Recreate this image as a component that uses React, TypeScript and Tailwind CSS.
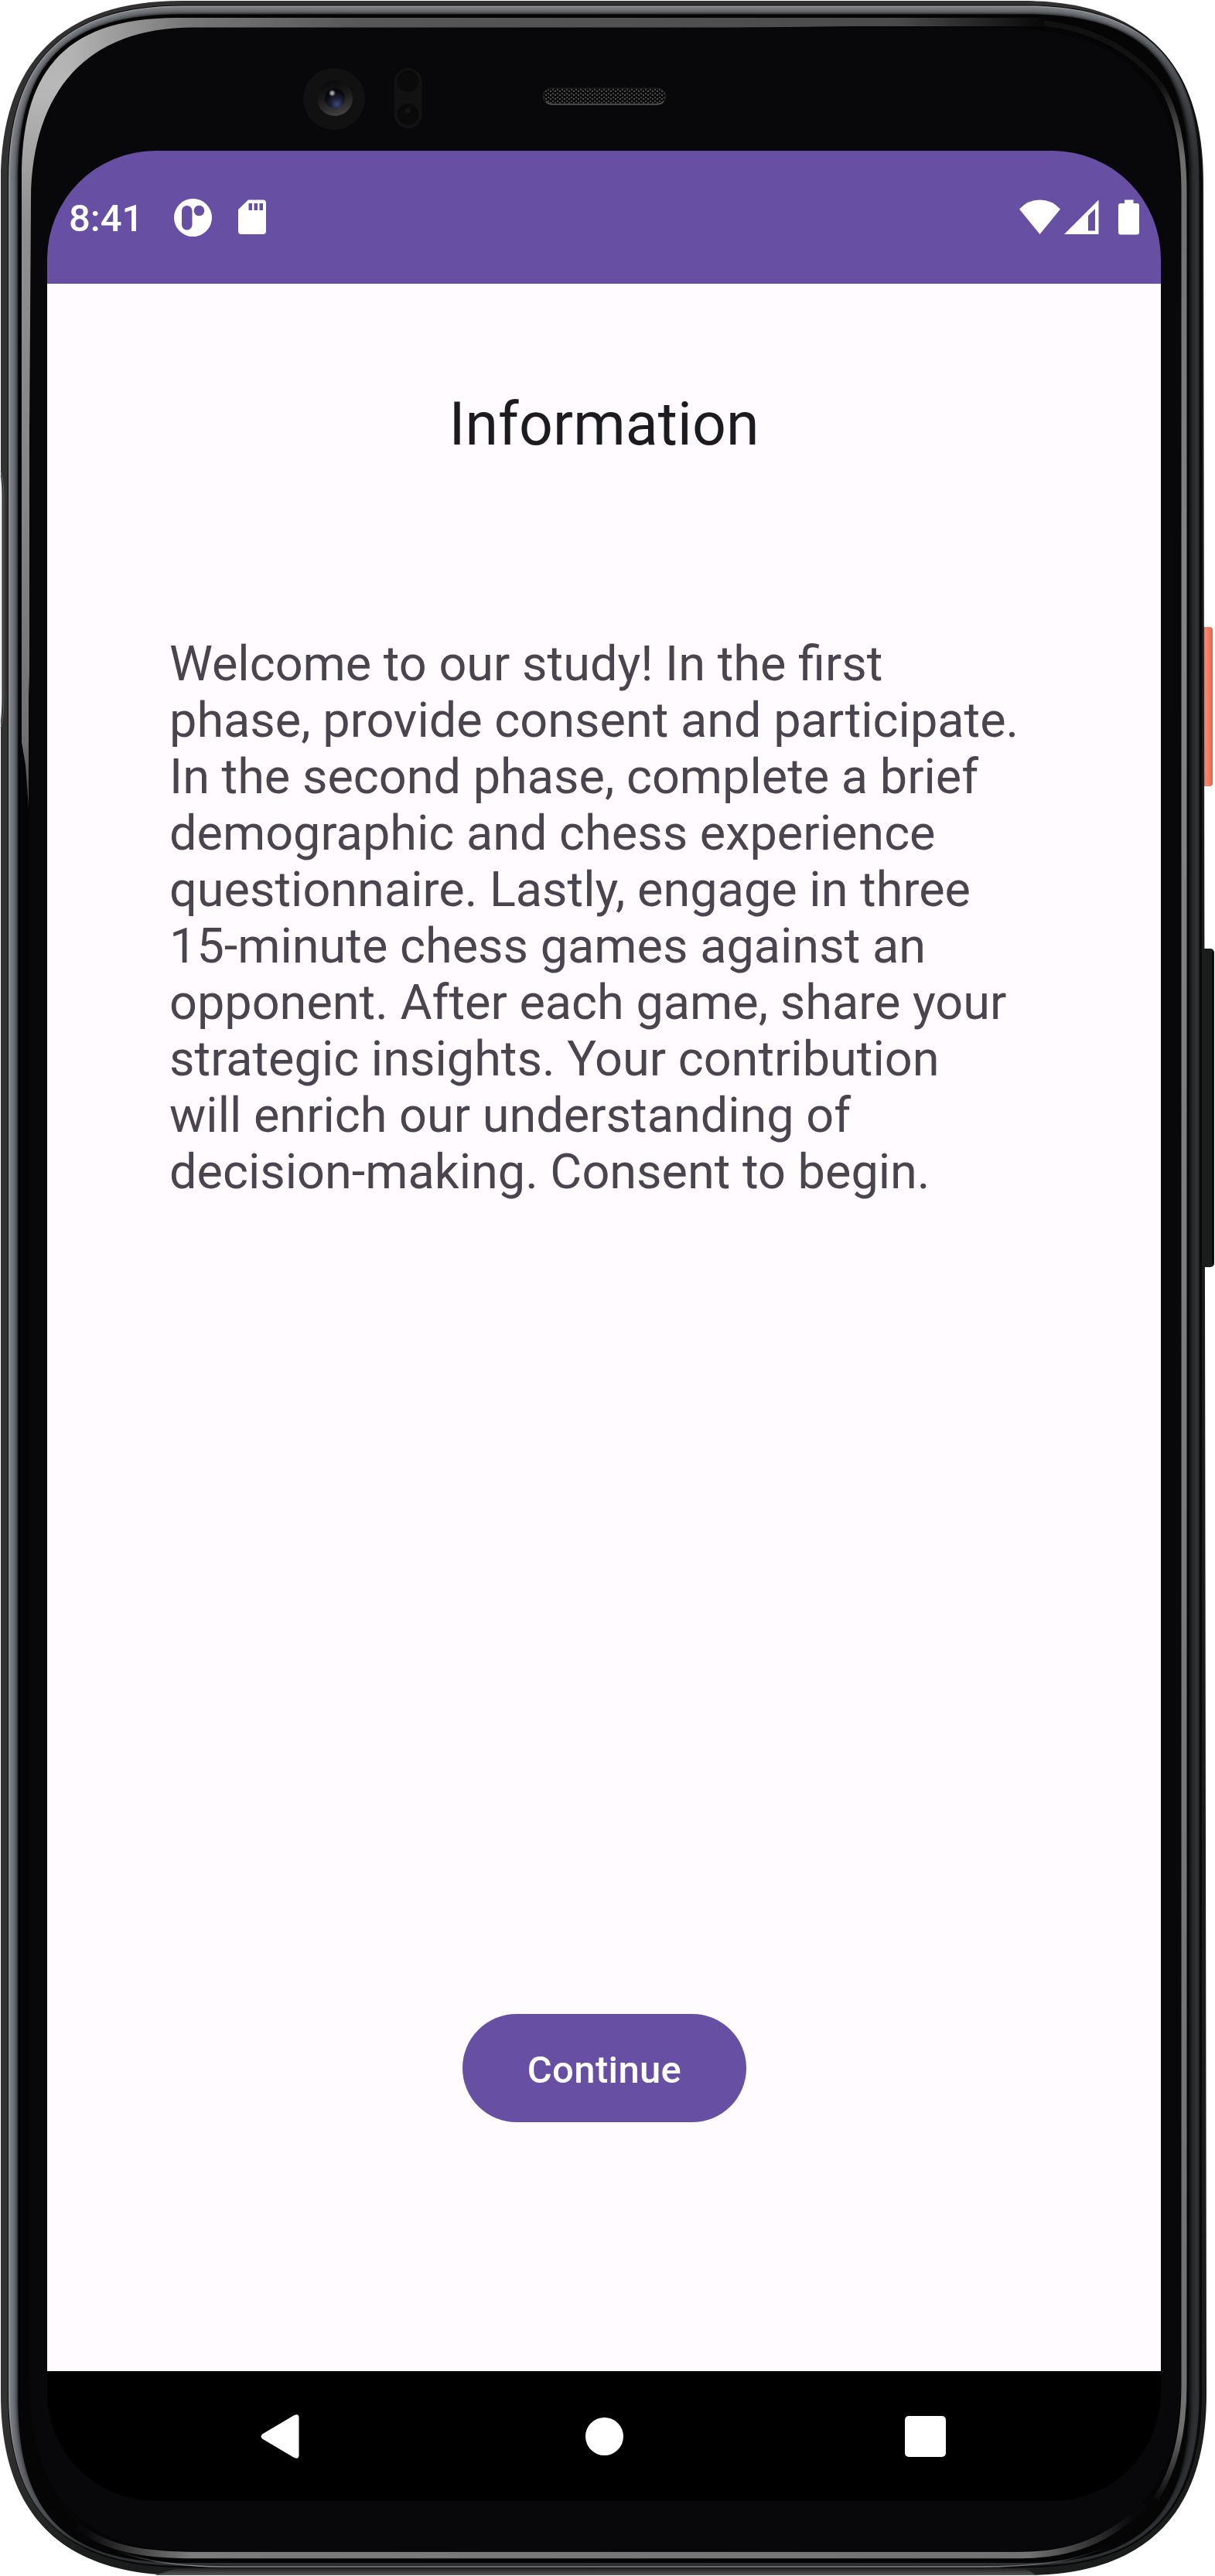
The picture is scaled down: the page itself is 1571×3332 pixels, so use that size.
import type { ReactNode } from "react";

/** Closed outline of the handset at a given inset, with soft superelliptic corners. */
function shell(l: number, t: number, r: number, b: number, k = 234, c = 79) {
  return `M${l},${t + k}C${l},${t + c} ${l + c},${t} ${l + k},${t}H${r - k}C${r - c},${t} ${r},${t + c} ${r},${t + k}V${b - k}C${r},${b - c} ${r - c},${b} ${r - k},${b}H${l + k}C${l + c},${b} ${l},${b - c} ${l},${b - k}Z`;
}

function Grad({ id, from, to }: { id: string; from: string; to: string }) {
  return (
    <linearGradient id={id} x1="0" y1="0" x2="1" y2="1">
      <stop offset="0.47" stopColor={from} />
      <stop offset="0.53" stopColor={to} />
    </linearGradient>
  );
}

const metal = [
  { from: "#8f9296", to: "#0a0a0b" },
  { from: "#787b80", to: "#2b2d2f" },
  { from: "#73767b", to: "#2e3033" },
  { from: "#6a6d72", to: "#2e3033" },
  { from: "#5d6064", to: "#2a2c2f" },
  { from: "#46484c", to: "#242628" },
  { from: "#242527", to: "#151617" },
];

function Handset() {
  return (
    <svg className="absolute inset-0" width="1571" height="3332" viewBox="0 0 1571 3332" aria-hidden="true">
      <defs>
        <Grad id="edge" from="#323232" to="#1b1c1c" />
        {metal.map((m, i) => (
          <Grad key={i} id={`m${i}`} from={m.from} to={m.to} />
        ))}
        <linearGradient id="coral" x1="0" x2="1">
          <stop offset="0" stopColor="#d9583f" />
          <stop offset="0.4" stopColor="#e0624a" />
          <stop offset="0.6" stopColor="#f58a70" />
          <stop offset="0.8" stopColor="#f2795f" />
          <stop offset="1" stopColor="#e85f47" />
        </linearGradient>
        <linearGradient id="glintL" gradientUnits="userSpaceOnUse" x1="0" y1="30" x2="0" y2="1060">
          <stop offset="0" stopColor="#b0b0b0" />
          <stop offset="0.08" stopColor="#b8b8b8" />
          <stop offset="0.25" stopColor="#8e8e8e" />
          <stop offset="0.6" stopColor="#858585" />
          <stop offset="0.9" stopColor="#707070" />
          <stop offset="1" stopColor="#3a3a3a" />
        </linearGradient>
        <linearGradient id="glintT" gradientUnits="userSpaceOnUse" x1="90" y1="0" x2="1350" y2="0">
          <stop offset="0" stopColor="#b4b4b4" />
          <stop offset="0.12" stopColor="#777777" />
          <stop offset="0.3" stopColor="#575757" />
          <stop offset="0.85" stopColor="#4a4a4a" />
          <stop offset="1" stopColor="#080809" />
        </linearGradient>
        <linearGradient id="glintR" gradientUnits="userSpaceOnUse" x1="0" y1="110" x2="0" y2="3235">
          <stop offset="0" stopColor="#111111" />
          <stop offset="0.03" stopColor="#6e6e6e" />
          <stop offset="0.2" stopColor="#838383" />
          <stop offset="0.97" stopColor="#707070" />
          <stop offset="1" stopColor="#08080a" />
        </linearGradient>
        <linearGradient id="glintB" gradientUnits="userSpaceOnUse" x1="110" y1="0" x2="1465" y2="0">
          <stop offset="0" stopColor="#08080a" />
          <stop offset="0.1" stopColor="#7c7c7c" />
          <stop offset="0.9" stopColor="#737373" />
          <stop offset="1" stopColor="#08080a" />
        </linearGradient>
        <linearGradient id="rim" gradientUnits="userSpaceOnUse" x1="150" y1="0" x2="1430" y2="0">
          <stop offset="0" stopColor="#8b8b8b" stopOpacity="0" />
          <stop offset="0.08" stopColor="#8b8b8b" />
          <stop offset="0.88" stopColor="#8b8b8b" />
          <stop offset="1" stopColor="#8b8b8b" stopOpacity="0" />
        </linearGradient>
        <linearGradient id="lip" gradientUnits="userSpaceOnUse" x1="0" y1="3319" x2="0" y2="3331">
          <stop offset="0" stopColor="#050505" />
          <stop offset="0.4" stopColor="#2c2c2c" />
          <stop offset="1" stopColor="#5a5a5a" />
        </linearGradient>
        <pattern id="mesh" width="6" height="5" patternUnits="userSpaceOnUse">
          <rect width="6" height="5" fill="#0c0c0c" />
          <rect x="0" y="0" width="2" height="2" fill="#454545" />
          <rect x="3" y="2" width="2" height="2" fill="#4d4d4d" />
        </pattern>
        <radialGradient id="lens" cx="0.6" cy="0.8" r="0.6">
          <stop offset="0" stopColor="#3a4a7c" />
          <stop offset="0.5" stopColor="#1c2034" />
          <stop offset="1" stopColor="#09090d" />
        </radialGradient>
        <radialGradient id="spark">
          <stop offset="0" stopColor="#b5b5b5" />
          <stop offset="0.5" stopColor="#7c7c7f" />
          <stop offset="1" stopColor="#101014" stopOpacity="0" />
        </radialGradient>
        <linearGradient id="ring" x1="0.3" y1="0" x2="0.6" y2="1">
          <stop offset="0" stopColor="#08080a" />
          <stop offset="0.5" stopColor="#1c1c1d" />
          <stop offset="1" stopColor="#424243" />
        </linearGradient>
      </defs>

      {/* side keys */}
      <rect x="1546" y="811" width="22" height="206" rx="4" fill="url(#coral)" />
      <rect x="1550" y="1227" width="20" height="412" rx="5" fill="#1b1c1c" />
      <rect x="1567" y="1231" width="2" height="404" fill="#0a0a0a" />

      {/* outer shell */}
      <path
        d="M1,235C1,80 80,1 235,1H1322C1477,1 1556,80 1556,235L1560,3097C1560,3252 1481,3331 1326,3331H235C80,3331 1,3252 1,3097Z"
        fill="url(#edge)"
      />
      <path d="M200,3331H1340L1320,3319H240Z" fill="url(#lip)" />
      <path d={shell(10, 6.5, 1554, 3321, 226, 73)} fill="#070707" />
      {metal.map((_, i) => (
        <path
          key={i}
          d={shell(11 + i * 1.9, 7.5 + i * 1.7, 1552.5 - i * 2, 3320 - i * 1.2, 225 - i * 1.8, 72 - i * 1.5)}
          fill={`url(#m${i})`}
        />
      ))}
      <path d={shell(23.5, 18.5, 1537.5, 3315, 213, 61)} fill="#050506" />
      <path d="M150,3299Q205,3320 290,3320H1270Q1380,3320 1430,3294" fill="none" stroke="url(#rim)" strokeWidth="1.5" />

      {/* glass edge reflections */}
      <path d="M28,960V230C28,165 39.750,113 71,78L110,110L60,262L37,900V1045L33,990Z" fill="url(#glintL)" />
      <path d="M70.500,78.500C102,42 152.500,23 230,23H1350V34H1100L250,45L110,111Z" fill="url(#glintT)" />
      <path
        d="M1350,30C1420,38 1470,70 1502,112C1522,145 1531,190 1531,250V3085C1531,3150 1518,3195 1495,3232"
        fill="none"
        stroke="url(#glintR)"
        strokeWidth="7"
      />
      <path d="M100,3268C140,3298 190,3305 250,3305H1320C1385,3305 1435,3285 1480,3240" fill="none" stroke="url(#glintB)" strokeWidth="8.5" />

      {/* front glass */}
      <path
        d="M38,560L40,262C40,120 110,35.500 250,35.500H1290C1450,35.500 1527,110 1527,262V3080C1527,3230 1440,3300.500 1310,3300.500H250C110,3300.500 38,3230 38,3080Z"
        fill="#08080a"
      />

      {/* antenna gap */}
      <path d="M0,612Q2.500,620 2.500,645V900Q2.500,925 0,940Z" fill="#eef2f0" />
      <path d="M1,610Q5,622 5,645V900Q5,925 1,942" fill="none" stroke="#59605d" strokeWidth="1" />

      {/* front camera */}
      <circle cx="432" cy="128" r="40" fill="#111112" />
      <circle cx="433" cy="127" r="23" fill="url(#ring)" />
      <circle cx="433" cy="127" r="13" fill="url(#lens)" />
      <circle cx="429.500" cy="120.500" r="5" fill="url(#spark)" />

      {/* proximity sensor */}
      <rect x="510" y="88" width="35.500" height="78" rx="17.700" fill="#121213" />
      <circle cx="527.500" cy="105" r="14" fill="#0a0a0b" />
      <circle cx="527.500" cy="148" r="14" fill="#0a0a0b" />
      <circle cx="527" cy="143" r="3.500" fill="#141412" />

      {/* earpiece */}
      <rect x="701.500" y="113.500" width="160" height="22" rx="11" fill="#1b1b1b" />
      <rect x="703" y="115" width="157" height="18.500" rx="9" fill="url(#mesh)" />
      <path d="M706,131Q709,135 715,135H848Q855,135 858,131" fill="none" stroke="#555757" strokeWidth="1.500" />
    </svg>
  );
}

function StatusBar() {
  return (
    <header className="flex h-[172px] shrink-0 items-center justify-between bg-[#6750a3] pr-7 pl-7 text-white">
      <div className="flex items-center">
        <span className="w-[136px] pt-[3px] text-[49px] leading-[58px] font-medium">8:41</span>
        <svg width="49" height="49" viewBox="0 0 49 49">
          <circle cx="24.500" cy="24.500" r="24.500" fill="#fff" />
          <rect x="10" y="9" width="13.500" height="31.500" rx="6.700" fill="#6750a3" />
          <circle cx="32.500" cy="15.500" r="6.800" fill="#6750a3" />
        </svg>
        <svg className="ml-[34px]" width="36" height="46" viewBox="0 0 36 46">
          <path d="M13,0.500H32Q36,0.500 36,4.500V41Q36,45 32,45H4Q0,45 0,41V13Z" fill="#fff" />
          <path d="M13.500,5H18V14H13.500ZM20.500,5H25V14H20.500ZM27.500,5H32V14H27.500Z" fill="#6750a3" />
        </svg>
      </div>
      <div className="flex items-center">
        <svg width="53" height="46" viewBox="0 0 53 46">
          <path d="M0,12.500Q11,0.500 26.500,0.500T53,12.500L26.500,45Z" fill="#fff" />
        </svg>
        <svg className="ml-[5px]" width="45" height="46" viewBox="0 0 45 46">
          <path fillRule="evenodd" d="M44.500,0.500V45H0ZM40,12L31,21V40.500H40Z" fill="#fff" />
        </svg>
        <svg className="ml-[25px]" width="27" height="46" viewBox="0 0 27 46">
          <path d="M8,0.500H19.500V5H24Q27,5 27,8V42.500Q27,45.500 24,45.500H3Q0,45.500 0,42.500V8Q0,5 3,5H8Z" fill="#fff" />
        </svg>
      </div>
    </header>
  );
}

function NavKey({ label, children }: { label: string; children: ReactNode }) {
  return (
    <button type="button" aria-label={label} className="flex w-[415px] items-center justify-center">
      {children}
    </button>
  );
}

function NavBar() {
  return (
    <nav className="flex h-[168px] shrink-0 items-center justify-center bg-black">
      <NavKey label="Back">
        <svg className="mr-[9px]" width="50" height="57" viewBox="0 0 50 57">
          <path d="M43,1.200Q49.500,-1.500 49.500,4V53Q49.500,58.500 43,55.800L2.500,31.800Q-1.500,28.500 2.500,25.200Z" fill="#fff" />
        </svg>
      </NavKey>
      <NavKey label="Home">
        <span className="size-[49px] rounded-full bg-white" />
      </NavKey>
      <NavKey label="Overview">
        <span className="size-[53px] rounded-[5px] bg-white" />
      </NavKey>
    </nav>
  );
}

const lines = [
  "Welcome to our study! In the first",
  "phase, provide consent and participate.",
  "In the second phase, complete a brief",
  "demographic and chess experience",
  "questionnaire. Lastly, engage in three",
  "15-minute chess games against an",
  "opponent. After each game, share your",
  "strategic insights. Your contribution",
  "will enrich our understanding of",
  "decision-making. Consent to begin.",
];

export default function App() {
  return (
    <div className="relative h-[3332px] w-[1571px] overflow-hidden bg-white pt-[195px] pl-[61px] font-[Roboto,sans-serif]">
      <Handset />
      <div className="relative flex h-[3040px] w-[1440px] flex-col overflow-hidden rounded-[140px]">
        <StatusBar />
        <main className="flex flex-1 flex-col items-center bg-[#fffbfe]">
          <h1 className="mt-[136px] text-[77px] leading-[92px] tracking-[0.1px] text-[#1c1b1f]">Information</h1>
          <p className="mt-[227px] w-full pl-[158px] text-[63px] leading-[73px] whitespace-nowrap text-[#49454f]">
            {lines.map((line) => (
              <span key={line} className="block">
                {line}
              </span>
            ))}
          </p>
          <button
            type="button"
            className="mt-auto mb-[322px] flex h-[140px] w-[367px] items-center justify-center rounded-full bg-[#6750a3] pt-[5px] pl-px text-[49px] font-medium tracking-[0.35px] text-white"
          >
            Continue
          </button>
        </main>
        <NavBar />
      </div>
    </div>
  );
}
